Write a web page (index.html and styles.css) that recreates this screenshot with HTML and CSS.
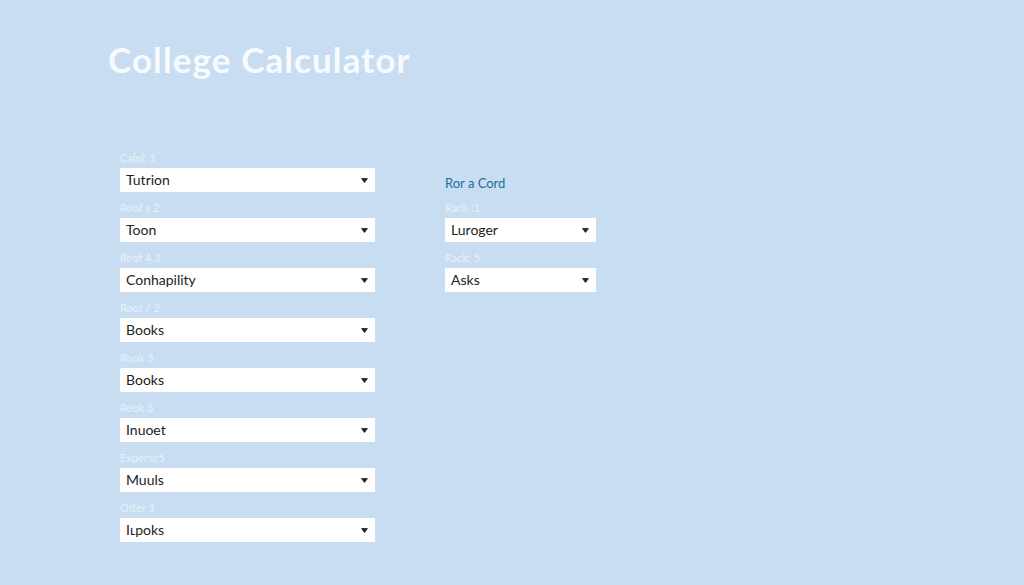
FILE: index.html
```html
<!DOCTYPE html>
<html lang="en">
<head>
<meta charset="utf-8">
<title>College Calculator</title>
<link rel="stylesheet" href="styles.css">
</head>
<body>
<main class="page">
  <h1 class="title">College Calculator</h1>
  <div class="form">
    <section class="col col-left">
      <div class="field"><span class="label">Calel: 1</span><div class="select"><span>Tutrion</span><svg class="caret" viewBox="0 0 7 5" width="7" height="5"><path d="M0.6 0.6 H6.4 L3.5 4.4 Z" fill="#222" stroke="#222" stroke-linejoin="round" stroke-width="0.9"/></svg></div></div>
      <div class="field"><span class="label">Roof ε 2</span><div class="select"><span>Toon</span><svg class="caret" viewBox="0 0 7 5" width="7" height="5"><path d="M0.6 0.6 H6.4 L3.5 4.4 Z" fill="#222" stroke="#222" stroke-linejoin="round" stroke-width="0.9"/></svg></div></div>
      <div class="field"><span class="label">Reof 4 3</span><div class="select"><span>Conhapility</span><svg class="caret" viewBox="0 0 7 5" width="7" height="5"><path d="M0.6 0.6 H6.4 L3.5 4.4 Z" fill="#222" stroke="#222" stroke-linejoin="round" stroke-width="0.9"/></svg></div></div>
      <div class="field"><span class="label">Root / 2</span><div class="select"><span>Books</span><svg class="caret" viewBox="0 0 7 5" width="7" height="5"><path d="M0.6 0.6 H6.4 L3.5 4.4 Z" fill="#222" stroke="#222" stroke-linejoin="round" stroke-width="0.9"/></svg></div></div>
      <div class="field"><span class="label">Rook 5</span><div class="select"><span>Books</span><svg class="caret" viewBox="0 0 7 5" width="7" height="5"><path d="M0.6 0.6 H6.4 L3.5 4.4 Z" fill="#222" stroke="#222" stroke-linejoin="round" stroke-width="0.9"/></svg></div></div>
      <div class="field"><span class="label">Reok 3</span><div class="select"><span>Inuoet</span><svg class="caret" viewBox="0 0 7 5" width="7" height="5"><path d="M0.6 0.6 H6.4 L3.5 4.4 Z" fill="#222" stroke="#222" stroke-linejoin="round" stroke-width="0.9"/></svg></div></div>
      <div class="field"><span class="label">Experse5</span><div class="select"><span>Muuls</span><svg class="caret" viewBox="0 0 7 5" width="7" height="5"><path d="M0.6 0.6 H6.4 L3.5 4.4 Z" fill="#222" stroke="#222" stroke-linejoin="round" stroke-width="0.9"/></svg></div></div>
      <div class="field"><span class="label">Otter 1</span><div class="select"><span>Iʟpoks</span><svg class="caret" viewBox="0 0 7 5" width="7" height="5"><path d="M0.6 0.6 H6.4 L3.5 4.4 Z" fill="#222" stroke="#222" stroke-linejoin="round" stroke-width="0.9"/></svg></div></div>
    </section>
    <section class="col col-right">
      <h2 class="heading">Ror a Cord</h2>
      <div class="field"><span class="label">Rack :1</span><div class="select"><span>Luroger</span><svg class="caret" viewBox="0 0 7 5" width="7" height="5"><path d="M0.6 0.6 H6.4 L3.5 4.4 Z" fill="#222" stroke="#222" stroke-linejoin="round" stroke-width="0.9"/></svg></div></div>
      <div class="field"><span class="label">Rack: 5</span><div class="select"><span>Asks</span><svg class="caret" viewBox="0 0 7 5" width="7" height="5"><path d="M0.6 0.6 H6.4 L3.5 4.4 Z" fill="#222" stroke="#222" stroke-linejoin="round" stroke-width="0.9"/></svg></div></div>
    </section>
  </div>
</main>
</body>
</html>
```

FILE: styles.css
```css
html, body {
  margin: 0;
  padding: 0;
  height: 100%;
  background: #c8ddf1;
}

body {
  font-family: Lato, "Open Sans", Arial, sans-serif;
}

.page {
  padding: 38px 0 0 108px;
}

.title {
  margin: 0;
  font-size: 35px;
  line-height: 42px;
  font-weight: 700;
  color: #f7fbff;
  letter-spacing: 1.1px;
}

.form {
  display: flex;
  gap: 70px;
  margin: 62px 0 0 12px;
}

.col {
  display: flex;
  flex-direction: column;
}

.col-left {
  width: 255px;
}

.col-right {
  width: 151px;
}

.heading {
  margin: 0;
  height: 50px;
  box-sizing: border-box;
  padding-top: 33px;
  font-size: 13px;
  line-height: 16px;
  font-weight: 400;
  color: #1a6f9a;
}

.field {
  display: flex;
  flex-direction: column;
}

.label {
  display: block;
  height: 26px;
  box-sizing: border-box;
  padding-top: 9px;
  font-size: 11px;
  line-height: 14px;
  color: #e6f0fa;
}

.select {
  height: 24px;
  box-sizing: border-box;
  display: flex;
  align-items: center;
  justify-content: space-between;
  padding: 0 7px 0 6px;
  background: #ffffff;
  font-size: 14px;
  line-height: 24px;
  color: #222;
}

.select span {
  margin-top: -1px;
}

.caret {
  display: block;
}
```
